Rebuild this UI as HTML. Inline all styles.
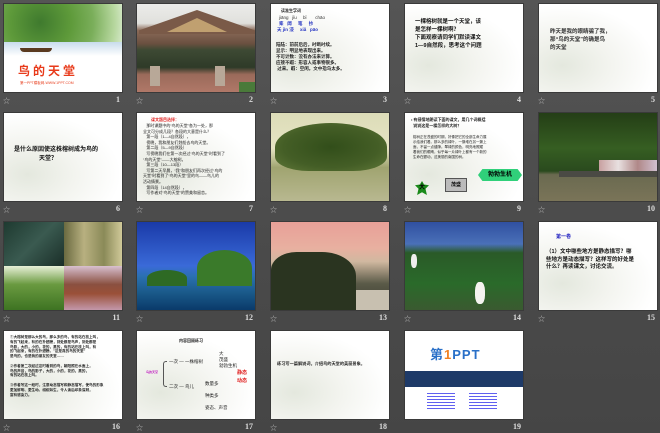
<!DOCTYPE html>
<html><head><meta charset="utf-8"><style>
*{margin:0;padding:0;box-sizing:border-box}
body{width:660px;height:433px;overflow:hidden;background:linear-gradient(#555,#4a4a4a 60%,#454545);font-family:"Liberation Sans","Noto Sans CJK SC",sans-serif;position:relative}
.s{position:absolute;width:120px;height:90px;background:#fff;overflow:hidden;border:1px solid #3a3a3a}
.w{background:radial-gradient(ellipse at 20% 70%,#e4e8de 0%,#f3f4ef 35%,#fff 70%)}
.n{position:absolute;color:#ddd;font-size:8px;font-weight:bold;font-family:"Liberation Serif",serif;text-align:right;width:30px}
.st{position:absolute;color:#bbb;font-size:7px}
.t{position:absolute;font-size:4.5px;line-height:6px;color:#222;font-weight:bold}
</style></head><body>

<!-- row 1 -->
<div class="s" style="left:3px;top:3px">
 <div style="position:absolute;left:0;top:0;width:120px;height:46px;background:radial-gradient(circle at 30% 40%,#3f7a2e,#5e9a3a 35%,#7aae5a 60%,#b8d8a0 85%,#e0eed8)"></div>
 <div style="position:absolute;left:0;top:38px;width:120px;height:14px;background:linear-gradient(#c8dcec,#fff)"></div>
 <div style="position:absolute;left:16px;top:44px;width:32px;height:4px;background:#5a3a20;border-radius:0 0 8px 8px"></div>
 <div style="position:absolute;left:14px;top:58px;color:#e83a1a;font-size:12px;font-weight:bold;letter-spacing:3px">鸟的天堂</div>
 <div style="position:absolute;left:16px;top:77px;color:#e84020;font-size:3.5px">第一PPT模板网-WWW.1PPT.COM</div>
</div>
<div class="s" style="left:136px;top:3px;background:linear-gradient(#ececea 0%,#e0e0dc 22%,#8a6a58 30%,#6a5040 45%,#3e4a34 52%,#2e3a28 72%,#9a6a5a 80%,#b07868 100%)">
 <div style="position:absolute;left:2px;top:6px;width:116px;height:24px;background:#7a5a48;clip-path:polygon(50% 0,100% 85%,100% 100%,0 100%,0 85%)"></div>
 <div style="position:absolute;left:30px;top:14px;width:60px;height:14px;background:#c0a070;clip-path:polygon(50% 0,100% 100%,0 100%)"></div>
 <div style="position:absolute;left:13px;top:62px;width:10px;height:20px;background:#b8a898"></div>
 <div style="position:absolute;left:78px;top:62px;width:10px;height:20px;background:#b8a898"></div>
 <div style="position:absolute;left:102px;top:78px;width:18px;height:12px;background:#4a7a3a"></div>
</div>
<div class="s w" style="left:270px;top:3px">
 <div class="t" style="left:10px;top:4px;font-size:4px">读准生字词</div>
 <div class="t" style="left:8px;top:11px;color:#333;font-weight:normal">jiāng &nbsp; jǐu &nbsp; &nbsp; bǐ &nbsp; &nbsp; &nbsp; chāo</div>
 <div class="t" style="left:8px;top:17px;color:#2030c0">桨 &nbsp; 阔 &nbsp; &nbsp; 笔 &nbsp; &nbsp; 抄</div>
 <div class="t" style="left:6px;top:23px;color:#2030c0">天 jìn 浸 &nbsp; &nbsp; xiǎ &nbsp; pāo</div>
 <div class="t" style="left:5px;top:38px">陆陆：前前后后，时断时续。<br>显示：明显地表现出来。<br>不可计数：没有办法来计算。<br>应接不暇：形容人或事物很多。<br>&nbsp;过来。暇：空闲。文中指鸟太多。</div>
</div>
<div class="s w" style="left:404px;top:3px">
 <div class="t" style="left:10px;top:14px;font-size:5.5px;line-height:8px;color:#111">一棵榕树就是一个天堂，该<br>是怎样一棵树啊？<br>下面观察请同学们默读课文<br>1—9自然段，思考这个问题</div>
</div>
<div class="s w" style="left:538px;top:3px">
 <div class="t" style="left:11px;top:24px;font-size:5.5px;line-height:8px;color:#333">昨天是我的眼睛骗了我，<br>那“鸟的天堂”的确是鸟<br>的天堂</div>
</div>

<!-- row 2 -->
<div class="s w" style="left:3px;top:112px">
 <div class="t" style="left:10px;top:33px;font-size:6px;line-height:9px;color:#111">是什么原因使这株榕树成为鸟的<br>&nbsp; &nbsp; &nbsp; &nbsp; &nbsp; &nbsp; &nbsp; &nbsp;天堂？</div>
</div>
<div class="s w" style="left:136px;top:112px">
 <div class="t" style="left:14px;top:4px;color:#e02020;font-size:4px">课文题目选择：</div>
 <div class="t" style="left:6px;top:10px;font-size:4px;line-height:5.6px;font-weight:normal">&nbsp; &nbsp;那时课题中的“鸟的天堂”各为一处，那<br>全文可分成几段？各段的大意是什么？<br>&nbsp; &nbsp;第一段（1—4自然段），<br>&nbsp; &nbsp;傍晚，我和朋友们划船去鸟的天堂。<br>&nbsp; &nbsp;第二段（5—9自然段）<br>&nbsp; &nbsp;写傍晚我们在第一次经过“鸟的天堂”时看到了<br>“鸟的天堂”——大榕树。<br>&nbsp; &nbsp;第三段（10—13段）<br>&nbsp; &nbsp;写第二天早晨，“我”和朋友们再次经过“鸟的<br>天堂”时看到了“鸟的天堂”里的鸟——鸟儿的<br>活动情景。<br>&nbsp; &nbsp;第四段（14自然段），<br>&nbsp; &nbsp;写作者对“鸟的天堂”的赞美和留恋。</div>
</div>
<div class="s" style="left:270px;top:112px;background:linear-gradient(#dcdcb8,#e6e4c4 40%,#a0a470 62%,#b8b890)">
 <div style="position:absolute;left:4px;top:10px;width:112px;height:48px;border-radius:50% 50% 30% 30%;background:radial-gradient(ellipse,#324e1a,#445e26 60%,#607838)"></div>
</div>
<div class="s w" style="left:404px;top:112px">
 <div class="t" style="left:6px;top:4px;font-size:4px;line-height:5.5px">• 有感情地朗读下面的课文，用几个词概括<br>&nbsp; 说说这是一棵怎样的大树？</div>
 <div class="t" style="left:8px;top:22px;font-size:3.5px;line-height:5px;font-weight:normal">榕树正在茂盛的时期，好像把它的全部生命力展<br>示给我们看。那么多的绿叶，一簇堆在另一簇上<br>面，不留一点缝隙。翠绿的颜色，明亮地照耀<br>着我们的眼睛，似乎每一片绿叶上都有一个新的<br>生命在颤动，这美丽的南国的树。</div>
 <div style="position:absolute;left:10px;top:68px;width:14px;height:14px;background:#1a8a1a;clip-path:polygon(50% 0,65% 25%,100% 30%,75% 55%,85% 100%,50% 80%,15% 100%,25% 55%,0 30%,35% 25%);color:#000;font-size:6px;font-weight:bold;text-align:center;line-height:14px">大</div>
 <div style="position:absolute;left:40px;top:65px;width:22px;height:14px;background:#bbb;border:1px solid #555;font-size:5px;font-weight:bold;text-align:center;line-height:12px">茂盛</div>
 <div style="position:absolute;left:73px;top:56px;width:44px;height:12px;background:#30d07a;clip-path:polygon(10% 0,90% 0,100% 50%,90% 100%,10% 100%,0 50%);font-size:6px;font-weight:bold;text-align:center;line-height:12px">勃勃生机</div>
</div>
<div class="s" style="left:538px;top:112px;background:linear-gradient(#243e16,#365e22 40%,#2a4a1e 66%,#6a6a50 70%,#7a7458)">
 <div style="position:absolute;left:20px;top:58px;width:100px;height:6px;background:#4a4a44"></div>
 <div style="position:absolute;left:60px;top:47px;width:58px;height:11px;background:linear-gradient(90deg,#c8a0a0,#e8e0e0,#b08888,#d0c0d0)"></div>
</div>

<!-- row 3 -->
<div class="s" style="left:3px;top:221px">
 <div style="position:absolute;left:0;top:0;width:60px;height:44px;background:linear-gradient(135deg,#1e3a30,#3a5a50,#1a2e28)"></div>
 <div style="position:absolute;left:60px;top:0;width:60px;height:44px;background:linear-gradient(90deg,#6a6a40,#b8b080,#8a8a58,#d8d0a0)"></div>
 <div style="position:absolute;left:0;top:44px;width:60px;height:46px;background:linear-gradient(#e8f0d8,#6a9a40 40%,#3a7020)"></div>
 <div style="position:absolute;left:60px;top:44px;width:60px;height:46px;background:linear-gradient(#d8c0d0,#8a5040 40%,#9a5038 60%,#c8a0b8)"></div>
</div>
<div class="s" style="left:136px;top:221px;background:linear-gradient(#1a3aa8,#3a6ad8 50%,#2a70b0 62%,#1a5a8a 80%,#0a3a6a)">
 <div style="position:absolute;left:60px;top:28px;width:55px;height:36px;border-radius:50% 50% 0 0;background:#3a7a2a"></div>
 <div style="position:absolute;left:10px;top:48px;width:40px;height:16px;border-radius:50% 50% 0 0;background:#2e6a24"></div>
</div>
<div class="s" style="left:270px;top:221px;background:linear-gradient(#e8a098,#e8b0a0 30%,#d0b8a0 45%,#5a5a48 70%,#3a3a30)">
 <div style="position:absolute;left:0;top:30px;width:85px;height:60px;border-radius:30% 40% 0 0;background:#2a3420"></div>
 <div style="position:absolute;left:85px;top:68px;width:35px;height:22px;background:#c8c0b0"></div>
</div>
<div class="s" style="left:404px;top:221px;background:linear-gradient(#3050a0,#4a70b8 25%,#2a5a28 35%,#2a6a2a 70%,#3a5a30)">
 <div style="position:absolute;left:70px;top:60px;width:10px;height:22px;background:#f4f4f0;border-radius:40%"></div>
 <div style="position:absolute;left:6px;top:32px;width:6px;height:14px;background:#eee;border-radius:40%"></div>
</div>
<div class="s w" style="left:538px;top:221px">
 <div class="t" style="left:17px;top:12px;color:#2020c0;font-size:5px">第一卷</div>
 <div class="t" style="left:7px;top:27px;font-size:5.5px;line-height:7.5px;color:#111">（1）文中哪些地方是静态描写？哪<br>些地方是动态描写？这样写的好处是<br>什么？再读课文，讨论交流。</div>
</div>

<!-- row 4 -->
<div class="s w" style="left:3px;top:330px">
 <div class="t" style="left:6px;top:4px;font-size:3.6px;line-height:4.8px">①大榕树是那么大的鸟，那么多的鸟，有的站在枝上叫，<br>有的飞起来，有的在扑翅膀，到处都是鸟声，到处都是<br>鸟影，大的，小的，花的，黑的，有的站在枝上叫，有<br>的飞起来，有的在扑翅膀。"这是真的鸟的天堂"<br>是鸟的，也是我的朋友的天堂……<br><br>②作者第二次经过这时看到的鸟，朝阳照在水面上，<br>鸟的声音，鸟的影子，大的，小的，花的，黑的，<br>有的站在枝上叫。<br><br>③作者写这一段时，注意动态描写和静态描写，使鸟的形象<br>更加鲜明、更生动、栩栩如生，令人读后印象深刻，<br>富有感染力。</div>
</div>
<div class="s w" style="left:136px;top:330px">
 <div class="t" style="left:42px;top:7px;font-size:4px">内容回顾练习</div>
 <div class="t" style="left:9px;top:38px;font-size:3px;color:#c020c0">鸟的天堂</div>
 <div style="position:absolute;left:26px;top:30px;width:4px;height:26px;border:1px solid #555;border-right:none;border-radius:3px 0 0 3px"></div>
 <div class="t" style="left:32px;top:28px;font-weight:normal">一次 — 一株榕树</div>
 <div class="t" style="left:32px;top:53px;font-weight:normal">二次 — 鸟儿</div>
 <div class="t" style="left:82px;top:20px;font-weight:normal">大<br>茂盛<br>勃勃生机</div>
 <div class="t" style="left:68px;top:50px;font-weight:normal">数量多<br><br>种类多<br><br>姿态、声音</div>
 <div class="t" style="left:100px;top:38px;color:#e02020;font-size:5px;line-height:8px">静态<br>动态</div>
</div>
<div class="s w" style="left:270px;top:330px">
 <div class="t" style="left:6px;top:30px;font-size:4.2px">练习写一篇解说词，介绍鸟的天堂的美丽景象。</div>
</div>
<div class="s" style="left:404px;top:330px;background:#fff">
 <div style="position:absolute;left:25px;top:13px;font-size:13px;font-weight:bold;color:#2a70c8;letter-spacing:1px">第<span style="color:#f08020">1</span>PPT</div>
 <div style="position:absolute;left:0;top:40px;width:120px;height:16px;background:#1e3a68"></div>
 <div style="position:absolute;left:22px;top:60px;width:28px;height:18px;background:repeating-linear-gradient(#fff 0 2px,#6060f0 2px 3px)"></div>
 <div style="position:absolute;left:64px;top:60px;width:28px;height:18px;background:repeating-linear-gradient(#fff 0 2px,#6060f0 2px 3px)"></div>
</div>

<!-- stars -->
<div class="st" style="left:3px;top:96px">☆</div><div class="st" style="left:136px;top:96px">☆</div><div class="st" style="left:270px;top:96px">☆</div><div class="st" style="left:404px;top:96px">☆</div><div class="st" style="left:538px;top:96px">☆</div>
<div class="st" style="left:3px;top:205px">☆</div><div class="st" style="left:136px;top:205px">☆</div><div class="st" style="left:270px;top:205px">☆</div><div class="st" style="left:404px;top:205px">☆</div><div class="st" style="left:538px;top:205px">☆</div>
<div class="st" style="left:3px;top:314px">☆</div><div class="st" style="left:136px;top:314px">☆</div><div class="st" style="left:270px;top:314px">☆</div><div class="st" style="left:404px;top:314px">☆</div><div class="st" style="left:538px;top:314px">☆</div>
<div class="st" style="left:3px;top:423px">☆</div><div class="st" style="left:136px;top:423px">☆</div><div class="st" style="left:270px;top:423px">☆</div>

<!-- numbers -->
<div class="n" style="left:90px;top:95px">1</div><div class="n" style="left:223px;top:95px">2</div><div class="n" style="left:357px;top:95px">3</div><div class="n" style="left:491px;top:95px">4</div><div class="n" style="left:625px;top:95px">5</div>
<div class="n" style="left:90px;top:204px">6</div><div class="n" style="left:223px;top:204px">7</div><div class="n" style="left:357px;top:204px">8</div><div class="n" style="left:491px;top:204px">9</div><div class="n" style="left:625px;top:204px">10</div>
<div class="n" style="left:90px;top:313px">11</div><div class="n" style="left:223px;top:313px">12</div><div class="n" style="left:357px;top:313px">13</div><div class="n" style="left:491px;top:313px">14</div><div class="n" style="left:625px;top:313px">15</div>
<div class="n" style="left:90px;top:422px">16</div><div class="n" style="left:223px;top:422px">17</div><div class="n" style="left:357px;top:422px">18</div><div class="n" style="left:491px;top:422px">19</div>
</body></html>
